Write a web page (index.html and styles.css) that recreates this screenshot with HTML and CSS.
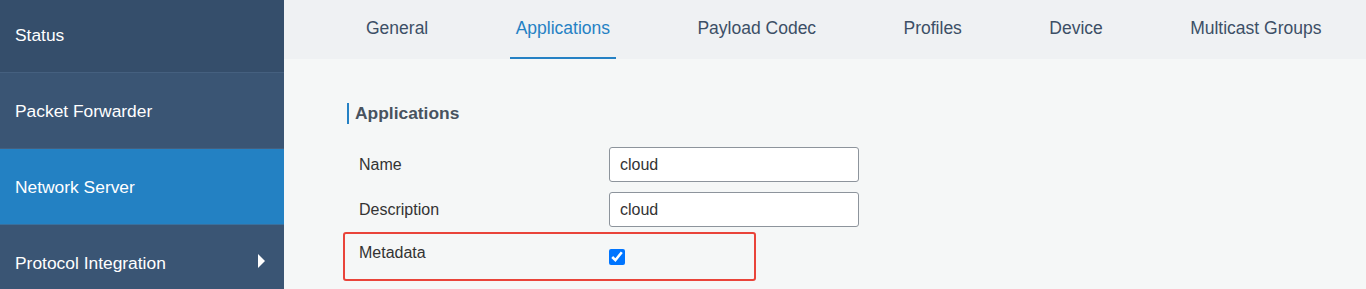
FILE: index.html
```html
<!DOCTYPE html>
<html lang="en">

<head>
    <meta charset="UTF-8">
    <meta name="viewport" content="width=device-width, initial-scale=1.0">
    <title>Network Server - Applications</title>
    <link rel="stylesheet" href="styles.css">
</head>

<body>
    <div class="page">
        <ul class="sideMenu">
            <li class="first">Status</li>
            <li>Packet Forwarder</li>
            <li class="active">Network Server</li>
            <li class="hasSub">Protocol Integration <span class="arrow"></span></li>
        </ul>
        <div class="main">
            <ul class="tabs">
                <li>General</li>
                <li class="current">Applications</li>
                <li>Payload Codec</li>
                <li>Profiles</li>
                <li>Device</li>
                <li>Multicast Groups</li>
            </ul>
            <div class="content">
                <h3 class="title">Applications</h3>
                <div class="formRow">
                    <label>Name</label>
                    <input type="text" value="cloud">
                </div>
                <div class="formRow">
                    <label>Description</label>
                    <input type="text" value="cloud">
                </div>
                <div class="formRow metaRow">
                    <label>Metadata</label>
                    <input type="checkbox" checked>
                </div>
            </div>
        </div>
    </div>
</body>

</html>
```
FILE: styles.css
```css
* {
    padding: 0;
    margin: 0;
    box-sizing: border-box;
}

body {
    font-family: "Liberation Sans", Arial, sans-serif;
    background-color: #f5f7f7;
    overflow: hidden;
}

ul {
    list-style: none;
}

.page {
    display: flex;
    height: 289px;
}

.sideMenu {
    width: 284px;
    flex-shrink: 0;
    background-color: #3a5574;
}

.sideMenu>li {
    height: 76px;
    padding-left: 15px;
    line-height: 76px;
    font-size: 17.4px;
    color: #fff;
    border-bottom: 1px solid #45607f;
    position: relative;
}

.sideMenu>li.first {
    height: 73px;
    line-height: 70px;
    background-color: #354e6b;
}

.sideMenu>li.active {
    background-color: #2381c3;
    border-bottom-color: #3a6f9c;
}

.arrow {
    position: absolute;
    right: 19px;
    top: 29px;
    width: 0;
    height: 0;
    border-top: 7px solid transparent;
    border-bottom: 7px solid transparent;
    border-left: 7px solid #fff;
}

.main {
    flex: 1;
}

.tabs {
    height: 59px;
    background-color: #eff1f3;
    display: flex;
    gap: 75.4px;
    padding-left: 76px;
}

.tabs>li {
    padding: 0 6px;
    height: 59px;
    line-height: 57px;
    font-size: 17.5px;
    color: #3c4f66;
    border-bottom: 2px solid transparent;
}

.tabs>li.current {
    color: #2581c4;
    border-bottom-color: #2581c4;
}

.content {
    padding: 44px 0 0 59px;
}

.title {
    margin-left: 4px;
    height: 21px;
    line-height: 21px;
    padding-left: 6px;
    border-left: 2px solid #2581c4;
    font-size: 17.4px;
    font-weight: bold;
    color: #48535f;
    margin-bottom: 23px;
}

.formRow {
    display: flex;
    align-items: center;
    padding-left: 16px;
    margin-bottom: 10px;
}

.formRow>label {
    width: 250px;
    font-size: 16px;
    color: #333;
}

.formRow>input[type="text"] {
    width: 250px;
    height: 35px;
    padding: 0 10px;
    border: 1px solid #8d949c;
    border-radius: 3px;
    background-color: #fff;
    font-family: "Liberation Sans", Arial, sans-serif;
    font-size: 16px;
    color: #333;
    outline: none;
}

.metaRow {
    margin-top: -5px;
    width: 413px;
    height: 49px;
    align-items: flex-start;
    padding-top: 9px;
    padding-left: 14px;
    border: 2px solid #e9443a;
    border-radius: 3px;
}

.metaRow>label {
    line-height: 20px;
}

.metaRow>input {
    width: 16px;
    height: 16px;
    margin: 6px 0 0 0;
}
```
